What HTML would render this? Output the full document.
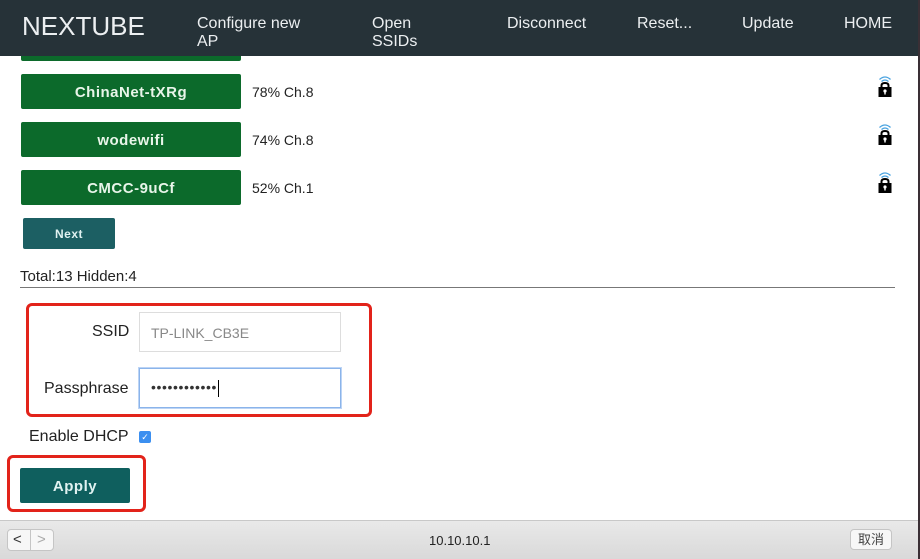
<!DOCTYPE html>
<html><head><meta charset="utf-8"><style>
*{margin:0;padding:0;box-sizing:border-box}
body{width:920px;height:559px;overflow:hidden;background:#fff;font-family:"Liberation Sans",Arial,sans-serif;position:relative}
.hdr{position:absolute;left:0;top:0;width:920px;height:56px;background:#263238;color:#eceff1}
.hdr div{position:absolute;font-size:16px;line-height:18px}
.logo{left:22px;top:12px;font-size:26px!important;line-height:28px!important}
.g{position:absolute;left:21px;width:220px;height:35px;background:#0c6a2b;color:#e8f5e9;font-weight:bold;font-size:15px;text-align:center;line-height:37px;border-radius:2px;letter-spacing:.5px}
.pct{position:absolute;left:252px;font-size:14px;color:#222}
.lock{position:absolute;left:877px}
.abs{position:absolute}
</style></head><body>
<div class="g" style="top:26px"></div>
<div class="hdr">
<div class="logo">NEXTUBE</div>
<div style="left:197px;top:15px">Configure new<br>AP</div>
<div style="left:372px;top:15px">Open<br>SSIDs</div>
<div style="left:507px;top:15px">Disconnect</div>
<div style="left:637px;top:15px">Reset...</div>
<div style="left:742px;top:15px">Update</div>
<div style="left:844px;top:15px">HOME</div>
</div>
<div class="g" style="top:74px">ChinaNet-tXRg</div><div class="pct" style="top:84px">78% Ch.8</div>
<div class="g" style="top:122px">wodewifi</div><div class="pct" style="top:132px">74% Ch.8</div>
<div class="g" style="top:170px">CMCC-9uCf</div><div class="pct" style="top:180px">52% Ch.1</div>
<svg class="lock" style="top:75px" width="16" height="24" viewBox="0 0 16 24"><path d="M2.5 4.5 Q8 -0.5 13.5 4.5 M4.5 6.5 Q8 3.5 11.5 6.5" stroke="#4aa3e0" stroke-width="1.3" fill="none"/><path d="M4.5 13 V10.5 Q4.5 8 8 8 Q11.5 8 11.5 10.5 V13" stroke="#000" stroke-width="2" fill="none"/><rect x="1.5" y="12" width="13" height="10" fill="#000"/><circle cx="8" cy="16" r="1.6" fill="#fff"/><rect x="7.3" y="16" width="1.4" height="3.5" fill="#fff"/></svg>
<svg class="lock" style="top:123px" width="16" height="24" viewBox="0 0 16 24"><path d="M2.5 4.5 Q8 -0.5 13.5 4.5 M4.5 6.5 Q8 3.5 11.5 6.5" stroke="#4aa3e0" stroke-width="1.3" fill="none"/><path d="M4.5 13 V10.5 Q4.5 8 8 8 Q11.5 8 11.5 10.5 V13" stroke="#000" stroke-width="2" fill="none"/><rect x="1.5" y="12" width="13" height="10" fill="#000"/><circle cx="8" cy="16" r="1.6" fill="#fff"/><rect x="7.3" y="16" width="1.4" height="3.5" fill="#fff"/></svg>
<svg class="lock" style="top:171px" width="16" height="24" viewBox="0 0 16 24"><path d="M2.5 4.5 Q8 -0.5 13.5 4.5 M4.5 6.5 Q8 3.5 11.5 6.5" stroke="#4aa3e0" stroke-width="1.3" fill="none"/><path d="M4.5 13 V10.5 Q4.5 8 8 8 Q11.5 8 11.5 10.5 V13" stroke="#000" stroke-width="2" fill="none"/><rect x="1.5" y="12" width="13" height="10" fill="#000"/><circle cx="8" cy="16" r="1.6" fill="#fff"/><rect x="7.3" y="16" width="1.4" height="3.5" fill="#fff"/></svg>
<div class="abs" style="left:23px;top:218px;width:92px;height:31px;background:#1c5f63;color:#e0f2f1;font-weight:bold;font-size:12px;text-align:center;line-height:33px;border-radius:2px;letter-spacing:.5px">Next</div>
<div class="abs" style="left:20px;top:268px;font-size:15px;color:#222">Total:13 Hidden:4</div>
<div class="abs" style="left:20px;top:287px;width:875px;height:1px;background:#777"></div>
<div class="abs" style="left:26px;top:303px;width:346px;height:114px;border:3px solid #e2231a;border-radius:6px"></div>
<div class="abs" style="left:92px;top:323px;font-size:16px;color:#222">SSID</div>
<div class="abs" style="left:139px;top:312px;width:202px;height:40px;border:1px solid #ddd;font-size:14px;color:#888;padding:12px 0 0 11px">TP-LINK_CB3E</div>
<div class="abs" style="left:44px;top:380px;font-size:16px;color:#222">Passphrase</div>
<div class="abs" style="left:139px;top:368px;width:202px;height:40px;border:1px solid #8bb4ea;box-shadow:0 0 0 1px #bcd4f5;font-size:14px;color:#333;padding:10px 0 0 11px;letter-spacing:0.6px">••••••••••••<span style="display:inline-block;width:1px;height:17px;background:#000;vertical-align:middle;margin-left:1px"></span></div>
<div class="abs" style="left:29px;top:428px;font-size:16px;color:#222">Enable DHCP</div>
<div class="abs" style="left:139px;top:431px;width:12px;height:12px;background:#3b8ff0;border-radius:2px;color:#fff;font-size:9px;line-height:12px;text-align:center">✓</div>
<div class="abs" style="left:7px;top:455px;width:139px;height:57px;border:3px solid #e2231a;border-radius:6px"></div>
<div class="abs" style="left:20px;top:468px;width:110px;height:35px;background:#0f5f5e;color:#e0f2f1;font-weight:bold;font-size:15px;text-align:center;line-height:37px;border-radius:2px;letter-spacing:.5px">Apply</div>
<div class="abs" style="left:0;top:520px;width:920px;height:39px;background:linear-gradient(#e9e9e9,#d9d9d9);border-top:1px solid #c8c8c8"></div>
<div class="abs" style="left:7px;top:529px;width:47px;height:22px;background:#f7f7f7;border:1px solid #c5c5c5;border-radius:4px"></div>
<div class="abs" style="left:30px;top:529px;width:1px;height:22px;background:#c5c5c5"></div>
<div class="abs" style="left:13px;top:531px;font-size:15px;color:#333">&lt;</div>
<div class="abs" style="left:37px;top:531px;font-size:15px;color:#aaa">&gt;</div>
<div class="abs" style="left:429px;top:533px;font-size:13px;color:#222">10.10.10.1</div>
<div class="abs" style="left:850px;top:529px;width:42px;height:21px;background:#f7f7f7;border:1px solid #c5c5c5;border-radius:4px;font-size:13px;color:#444;text-align:center;line-height:19px;font-family:'Liberation Sans','Noto Sans CJK SC',sans-serif">取消</div>
<div class="abs" style="left:918px;top:0;width:2px;height:559px;background:#3a2f35"></div>
</body></html>
